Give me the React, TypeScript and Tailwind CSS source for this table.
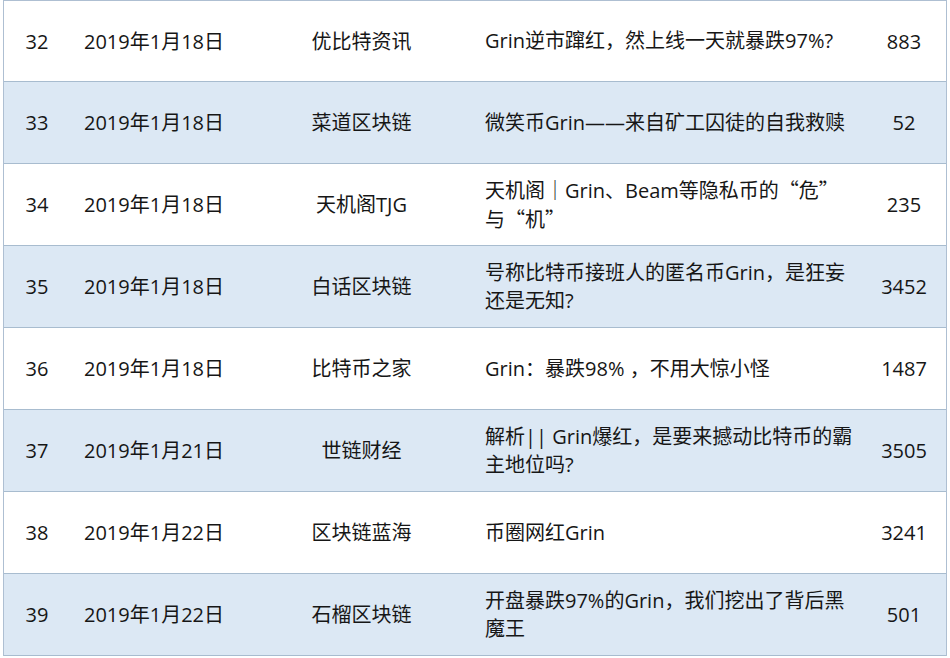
import React from "react";

type Row = { n: string; date: string; src: string; title: React.ReactNode; count: string };

const Q = ({ c }: { c: string }) => (
  <span style={{ fontFamily: '"Noto Sans CJK SC", sans-serif' }}>{c}</span>
);

const rows: Row[] = [
  { n: "32", date: "2019年1月18日", src: "优比特资讯", title: "Grin逆市蹿红，然上线一天就暴跌97%?", count: "883" },
  { n: "33", date: "2019年1月18日", src: "菜道区块链", title: "微笑币Grin——来自矿工囚徒的自我救赎", count: "52" },
  {
    n: "34",
    date: "2019年1月18日",
    src: "天机阁TJG",
    title: (
      <>
        天机阁｜Grin、Beam等隐私币的<Q c="“" />危<Q c="”" />
        <br />与<Q c="“" />机<Q c="”" />
      </>
    ),
    count: "235",
  },
  {
    n: "35",
    date: "2019年1月18日",
    src: "白话区块链",
    title: (
      <>
        号称比特币接班人的匿名币Grin，是狂妄
        <br />
        还是无知?
      </>
    ),
    count: "3452",
  },
  { n: "36", date: "2019年1月18日", src: "比特币之家", title: "Grin：暴跌98% ，不用大惊小怪", count: "1487" },
  {
    n: "37",
    date: "2019年1月21日",
    src: "世链财经",
    title: (
      <>
        解析|| Grin爆红，是要来撼动比特币的霸
        <br />
        主地位吗?
      </>
    ),
    count: "3505",
  },
  { n: "38", date: "2019年1月22日", src: "区块链蓝海", title: "币圈网红Grin", count: "3241" },
  {
    n: "39",
    date: "2019年1月22日",
    src: "石榴区块链",
    title: (
      <>
        开盘暴跌97%的Grin，我们挖出了背后黑
        <br />
        魔王
      </>
    ),
    count: "501",
  },
];

export default function App() {
  return (
    <div
      className="w-[950px] h-[658px] bg-white overflow-hidden"
      style={{ fontFamily: '"Open Sans", "Noto Sans CJK SC", sans-serif' }}
    >
      <div className="ml-[3px] w-[944px] border-x border-t border-[#aebfd2] text-[20px] text-[#161616]">
        {rows.map((r, i) => (
          <div
            key={r.n}
            className={`flex items-center border-b border-[#a8bccf] ${i === 0 ? "h-[81px]" : "h-[82px]"} ${
              i % 2 === 1 ? "bg-[#dce8f4]" : "bg-white"
            }`}
          >
            <div className="w-[66px] shrink-0 text-center leading-[29px]">{r.n}</div>
            <div className="w-[168px] shrink-0 text-center leading-[29px] whitespace-nowrap">{r.date}</div>
            <div className="w-[247px] shrink-0 text-center leading-[29px] whitespace-nowrap">{r.src}</div>
            <div className="w-[377px] shrink-0 leading-[28px] whitespace-nowrap">{r.title}</div>
            <div className="flex-1 text-center leading-[29px]">{r.count}</div>
          </div>
        ))}
      </div>
    </div>
  );
}
